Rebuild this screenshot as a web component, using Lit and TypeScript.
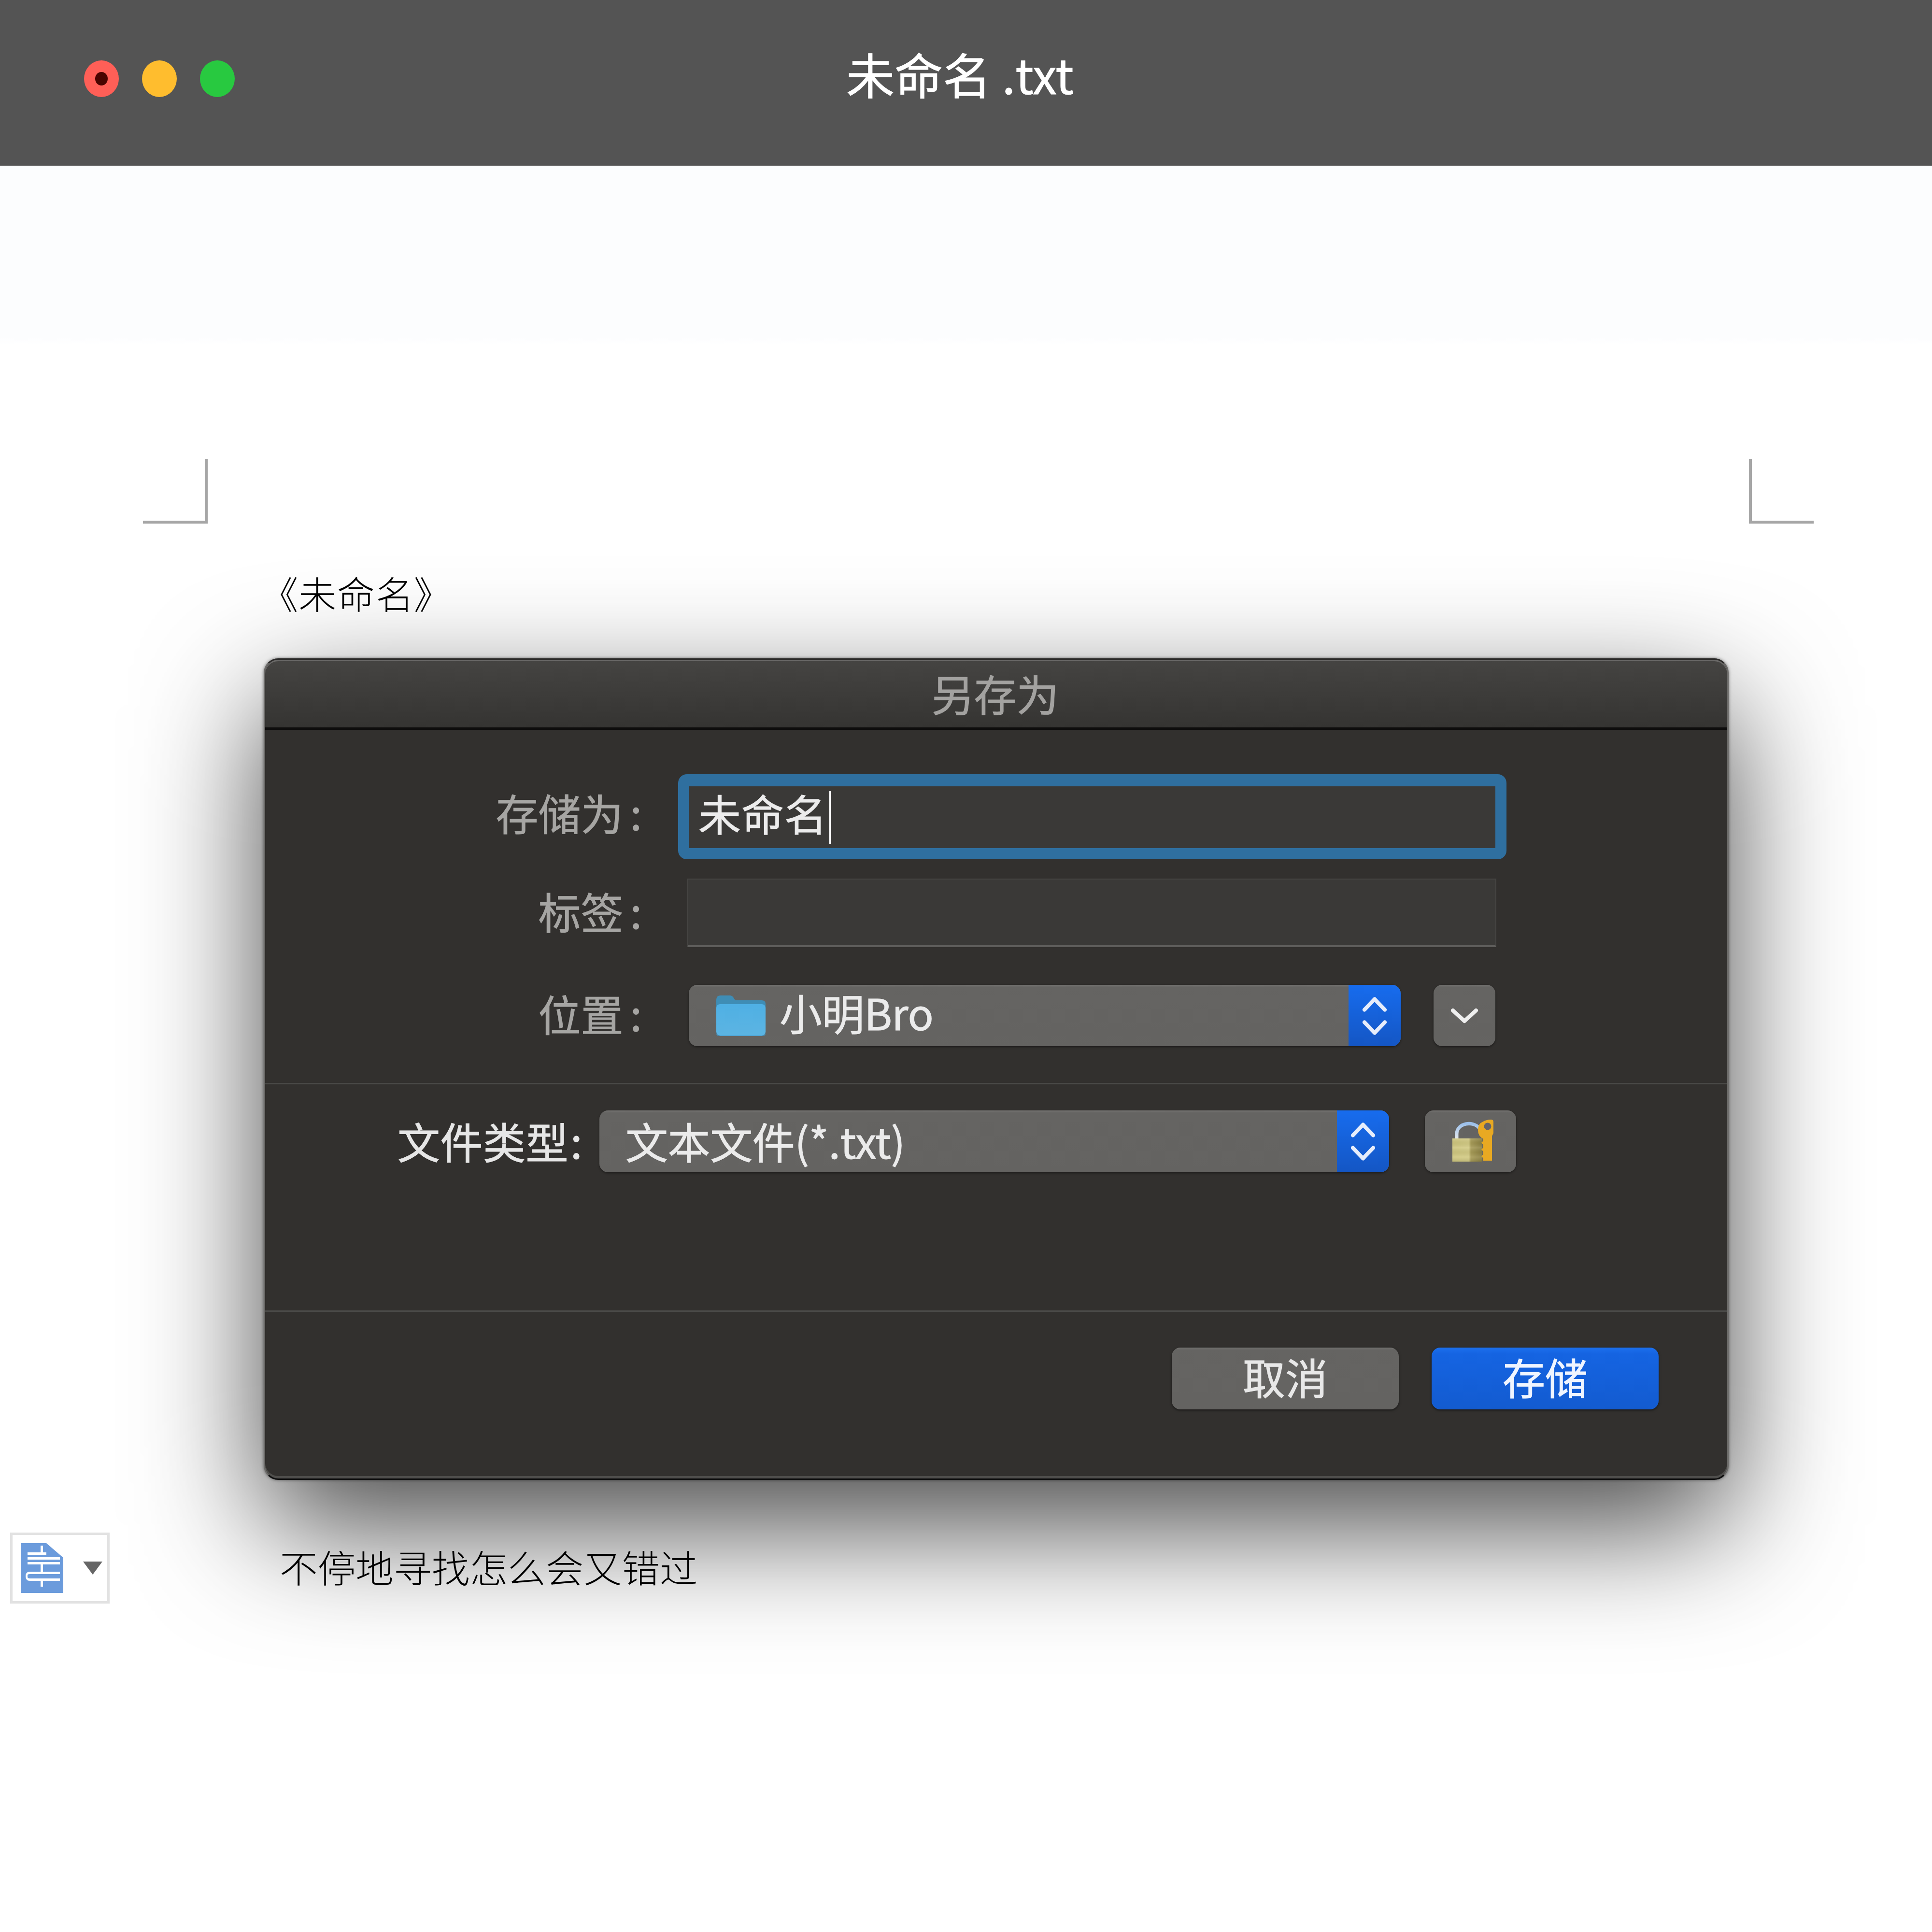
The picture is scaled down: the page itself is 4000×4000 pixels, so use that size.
import { LitElement, html, css, svg } from "lit";
import { customElement } from "lit/decorators.js";

const stepper = svg`<svg class="stepper" viewBox="0 0 56 84" width="56" height="84"><path d="M7 29.5 L28 7.5 L49 29.5 M7 55.5 L28 77.5 L49 55.5" fill="none" stroke="#e6edfb" stroke-width="8" stroke-linecap="round" stroke-linejoin="round"/></svg>`;

@customElement("app-root")
export class AppRoot extends LitElement {
  static styles = css`
    :host { display: block; width: 4000px; height: 4000px; background: #fff; font-family: "Noto Sans CJK SC", "Liberation Sans", sans-serif; overflow: hidden; }
    .titlebar { height: 343px; background: #545454; display: flex; align-items: center; padding-left: 174px; box-sizing: border-box; }
    .lights { display: flex; gap: 48px; width: 360px; margin-top: -17px; }
    .light { width: 72px; height: 76px; border-radius: 50%; display: flex; align-items: center; justify-content: center; }
    .red { background: #ff5f57; } .yellow { background: #ffbd2e; } .green { background: #28c940; }
    .dot { width: 26px; height: 28px; border-radius: 50%; background: #4a0400; }
    .title { margin-left: 1218px; color: #fff; font-size: 100px; line-height: 120px; margin-top: -40px; white-space: pre; -webkit-text-stroke: 1px #fff; }
    .band { height: 371px; background: linear-gradient(#fcfdfe 0, #fcfdfe 96%, #fff 100%); }
    .marks { display: flex; justify-content: space-between; padding: 236px 245px 0 296px; }
    .mark { width: 134px; height: 134px; box-sizing: border-box; border: 0 solid #a6a6a6; border-bottom-width: 6px; }
    .mark.l { border-right-width: 6px; } .mark.r { border-left-width: 6px; }
    .doc { color: #000; font-size: 78.7px; line-height: 100px; font-weight: 300; }
    .p1 { margin: 93px 0 0 577px; font-feature-settings: "palt"; height: 186px; letter-spacing: 2px; font-size: 78px; }
    .dialog { margin-left: 546px; width: 3033px; height: 1701px; box-sizing: border-box; background: #32302e; border-radius: 30px; border: 3px solid #6c6b69; border-top-color: #2b2a29; border-bottom-color: #0f0f0f; box-shadow: 0 95px 300px rgba(0,0,0,.72), 0 0 6px rgba(0,0,0,.5), inset 0 -5px 0 #4f4e4c; display: flex; flex-direction: column; color: #a6a5a3; -webkit-text-stroke: 1px currentColor; }
    .dhead { height: 145px; box-sizing: border-box; border-bottom: 5px solid #0e0d0d; background: linear-gradient(#454442, #353432); box-shadow: inset 0 3px 0 #6a6968; border-radius: 27px 27px 0 0; display: flex; justify-content: center; align-items: center; font-size: 88px; line-height: 100px; color: #a3a2a0; }
    .dhead span { margin-left: -4px; margin-top: -4px; }
    .section { box-sizing: border-box; }
    .s1 { height: 734px; padding-top: 92px; border-bottom: 3px solid #4a4947; }
    .row { display: flex; align-items: center; }
    .label { width: 780px; margin-right: 5px; text-align: right; font-size: 88px; line-height: 100px; flex: none; margin-top: -10px; }
    .label.first { margin-top: -20px; }
    .label.third { margin-top: -12px; }
    .label i { font-style: normal; margin-left: 14px; }
    .ring { margin-left: 70px; width: 1715px; height: 176px; box-sizing: border-box; border-radius: 18px; background: #3a3937; border: solid #2f6f9f; border-width: 25px 23px 23px 22px; display: flex; align-items: center; color: #ececec; font-size: 88px; line-height: 100px; padding-left: 20px; }
    .ring span { margin-top: -20px; letter-spacing: 1px; }
    .caret { width: 4px; height: 109px; background: #fff; margin-left: 4px; }
    .r2 { margin-top: 40px; }
    .field { margin-left: 89px; width: 1675px; height: 142px; box-sizing: border-box; background: #3a3937; border: 2px solid #464543; border-bottom: 4px solid #5f5e5c; }
    .r3 { margin-top: 78px; }
    .select { height: 127px; display: flex; border-radius: 18px; background: linear-gradient(#747371 0, #656462 5px, #646361 100%); box-shadow: 0 2px 4px rgba(0,0,0,.4); color: #ebebeb; font-size: 88px; line-height: 100px; box-sizing: border-box; }
    .select .main { flex: 1; display: flex; align-items: center; }
    .select .main > span { margin-top: -5px; }
    .loc .main > span { margin-top: -15px; letter-spacing: -0.4px; }
    .select .blue { background: linear-gradient(#176cee, #1456c4); border-radius: 0 18px 18px 0; display: flex; align-items: center; justify-content: center; }
    .loc { margin-left: 92px; width: 1474px; }
    .loc .main { padding-left: 57px; gap: 29px; }
    .loc .blue, .typ .blue { width: 108px; }
    .iconbtn { height: 127px; border-radius: 18px; background: linear-gradient(#737270 0, #656462 5px, #646361 100%); box-shadow: 0 2px 4px rgba(0,0,0,.4); display: flex; align-items: center; justify-content: center; box-sizing: border-box; }
    .chev { margin-left: 68px; width: 128px; }
    .s2 { height: 471px; padding-top: 54px; padding-left: 274px; border-bottom: 3px solid #4a4947; }
    .s2 .lab2 { color: #e6e6e6; font-size: 88px; line-height: 100px; width: 418px; flex: none; white-space: nowrap; margin-top: -5px; letter-spacing: 0.5px; }
    .lab2 i { font-style: normal; margin-left: 4px; }
    .typ { width: 1635px; height: 128px; }
    .typ .main { padding-left: 54px; }
    .typ .main > span { letter-spacing: -0.4px; }
    .lock { margin-left: 74px; width: 189px; height: 128px; padding-left: 10px; padding-bottom: 3px; }
    .s3 { padding: 74px 142px 0 0; display: flex; justify-content: flex-end; gap: 68px; }
    .btn { width: 470px; height: 128px; border-radius: 18px; display: flex; align-items: center; justify-content: center; font-size: 88px; line-height: 100px; color: #e8e8e8; box-shadow: 0 2px 5px rgba(0,0,0,.5); }
    .btn span { margin-top: -10px; }
    .cancel { background: linear-gradient(#747371 0, #656462 5px, #646361 100%); }
    .save { background: linear-gradient(#1c70ee, #1564e2 10%, #135bd0 100%); color: #f0f5ff; }
    .foot { display: flex; margin-top: 109px; align-items: flex-start; }
    .widget { margin-left: 21px; width: 206px; height: 147px; box-sizing: border-box; background: #fff; border: 5px solid #e2e2e2; display: flex; align-items: center; padding-left: 17px; gap: 41px; }
    .p2 { margin: 20px 0 0 352px; }
  `;

  render() {
    return html`
      <div class="titlebar">
        <div class="lights">
          <div class="light red"><div class="dot"></div></div>
          <div class="light yellow"></div>
          <div class="light green"></div>
        </div>
        <div class="title">未命名 .txt</div>
      </div>
      <div class="band"></div>
      <div class="marks"><div class="mark l"></div><div class="mark r"></div></div>
      <div class="doc p1">《未命名》</div>
      <div class="dialog">
        <div class="dhead"><span>另存为</span></div>
        <div class="section s1">
          <div class="row">
            <div class="label first">存储为<i>:</i></div>
            <div class="ring"><span>未命名</span><div class="caret"></div></div>
          </div>
          <div class="row r2">
            <div class="label">标签<i>:</i></div>
            <div class="field"></div>
          </div>
          <div class="row r3">
            <div class="label third">位置<i>:</i></div>
            <div class="select loc">
              <div class="main">
                <svg width="102" height="84" viewBox="0 0 102 84">
                  <defs><linearGradient id="fg" x1="0" y1="0" x2="0" y2="1"><stop offset="0" stop-color="#4fb0e4"/><stop offset="1" stop-color="#5cb4e2"/></linearGradient></defs>
                  <path d="M0 9 Q0 0 9 0 H28 Q33 0 36 5 L39 10 H94 Q102 10 102 18 V30 H0 Z" fill="#3f8db5"/>
                  <rect x="0" y="18" width="102" height="65" rx="8" fill="url(#fg)"/>
                  <path d="M0 76 Q0 83 8 83 H94 Q102 83 102 76 V79 Q102 84 94 84 H8 Q0 84 0 79 Z" fill="#3d93c4"/>
                </svg>
                <span>小明Bro</span>
              </div>
              <div class="blue">${stepper}</div>
            </div>
            <div class="iconbtn chev">
              <svg width="60" height="36" viewBox="0 0 60 36"><path d="M6 7 L30 29 L54 7" fill="none" stroke="#efefef" stroke-width="8" stroke-linecap="round" stroke-linejoin="round"/></svg>
            </div>
          </div>
        </div>
        <div class="section s2">
          <div class="row">
            <div class="lab2">文件类型<i>:</i></div>
            <div class="select typ">
              <div class="main"><span>文本文件(*.txt)</span></div>
              <div class="blue">${stepper}</div>
            </div>
            <div class="iconbtn lock">
              <svg width="86" height="88" viewBox="0 0 86 88">
                <defs>
                  <linearGradient id="brass" x1="0" y1="0" x2="1" y2="0"><stop offset="0" stop-color="#cfc77f"/><stop offset=".55" stop-color="#d4cc86"/><stop offset=".62" stop-color="#a99d58"/><stop offset="1" stop-color="#8c8143"/></linearGradient>
                  <linearGradient id="stripes" x1="0" y1="0" x2="0" y2="1"><stop offset="0" stop-color="#fff" stop-opacity=".12"/><stop offset=".2" stop-color="#000" stop-opacity=".05"/><stop offset=".4" stop-color="#fff" stop-opacity=".1"/><stop offset=".6" stop-color="#000" stop-opacity=".05"/><stop offset=".8" stop-color="#fff" stop-opacity=".08"/><stop offset="1" stop-color="#000" stop-opacity=".1"/></linearGradient>
                  <linearGradient id="shack" x1="0" y1="0" x2="0" y2="1"><stop offset="0" stop-color="#9cc0ea"/><stop offset="1" stop-color="#e4e8ec"/></linearGradient>
                </defs>
                <path d="M9 40 V30 C9 6 44 2 56 18" fill="none" stroke="url(#shack)" stroke-width="7"/>
                <rect x="0" y="39" width="62" height="48" fill="url(#brass)"/>
                <rect x="0" y="39" width="62" height="48" fill="url(#stripes)"/>
                <path d="M53 22 Q53 8 62 5 Q70 0 80 0 Q85 0 85 5 V28 L82 34 V85 H64 V80 L60 76 L64 72 V66 L60 62 L64 58 V52 L60 48 L64 44 V40 Q53 34 53 22 Z" fill="#e8a922"/>
                <circle cx="73" cy="14" r="7.5" fill="#64646a"/>
              </svg>
            </div>
          </div>
        </div>
        <div class="section s3">
          <div class="btn cancel"><span>取消</span></div>
          <div class="btn save"><span>存储</span></div>
        </div>
      </div>
      <div class="foot">
        <div class="widget">
          <svg width="88" height="103" viewBox="0 0 88 103">
            <path d="M0 0 H53 L88 30 V103 H0 Z" fill="#6b9bdc"/>
            <path d="M14 19 V24 H53 V19 Z M14 29 V34 H81 V29 Z M14 39 V44 H81 V39 Z M41 5 H46 V19 H41 Z M41 44 H46 V59 H41 Z M19 59 H81 V64 H19 Q14 64 14 66 V70 Q14 73 19 73 H81 V78 H19 Q10 78 10 68 Q10 59 19 59 Z M41 78 H46 V90 H41 Z" fill="#fff"/>
          </svg>
          <svg width="40" height="27" viewBox="0 0 40 27"><path d="M0 0 H40 L20 27 Z" fill="#666"/></svg>
        </div>
        <div class="doc p2">不停地寻找怎么会又错过</div>
      </div>
    `;
  }
}
